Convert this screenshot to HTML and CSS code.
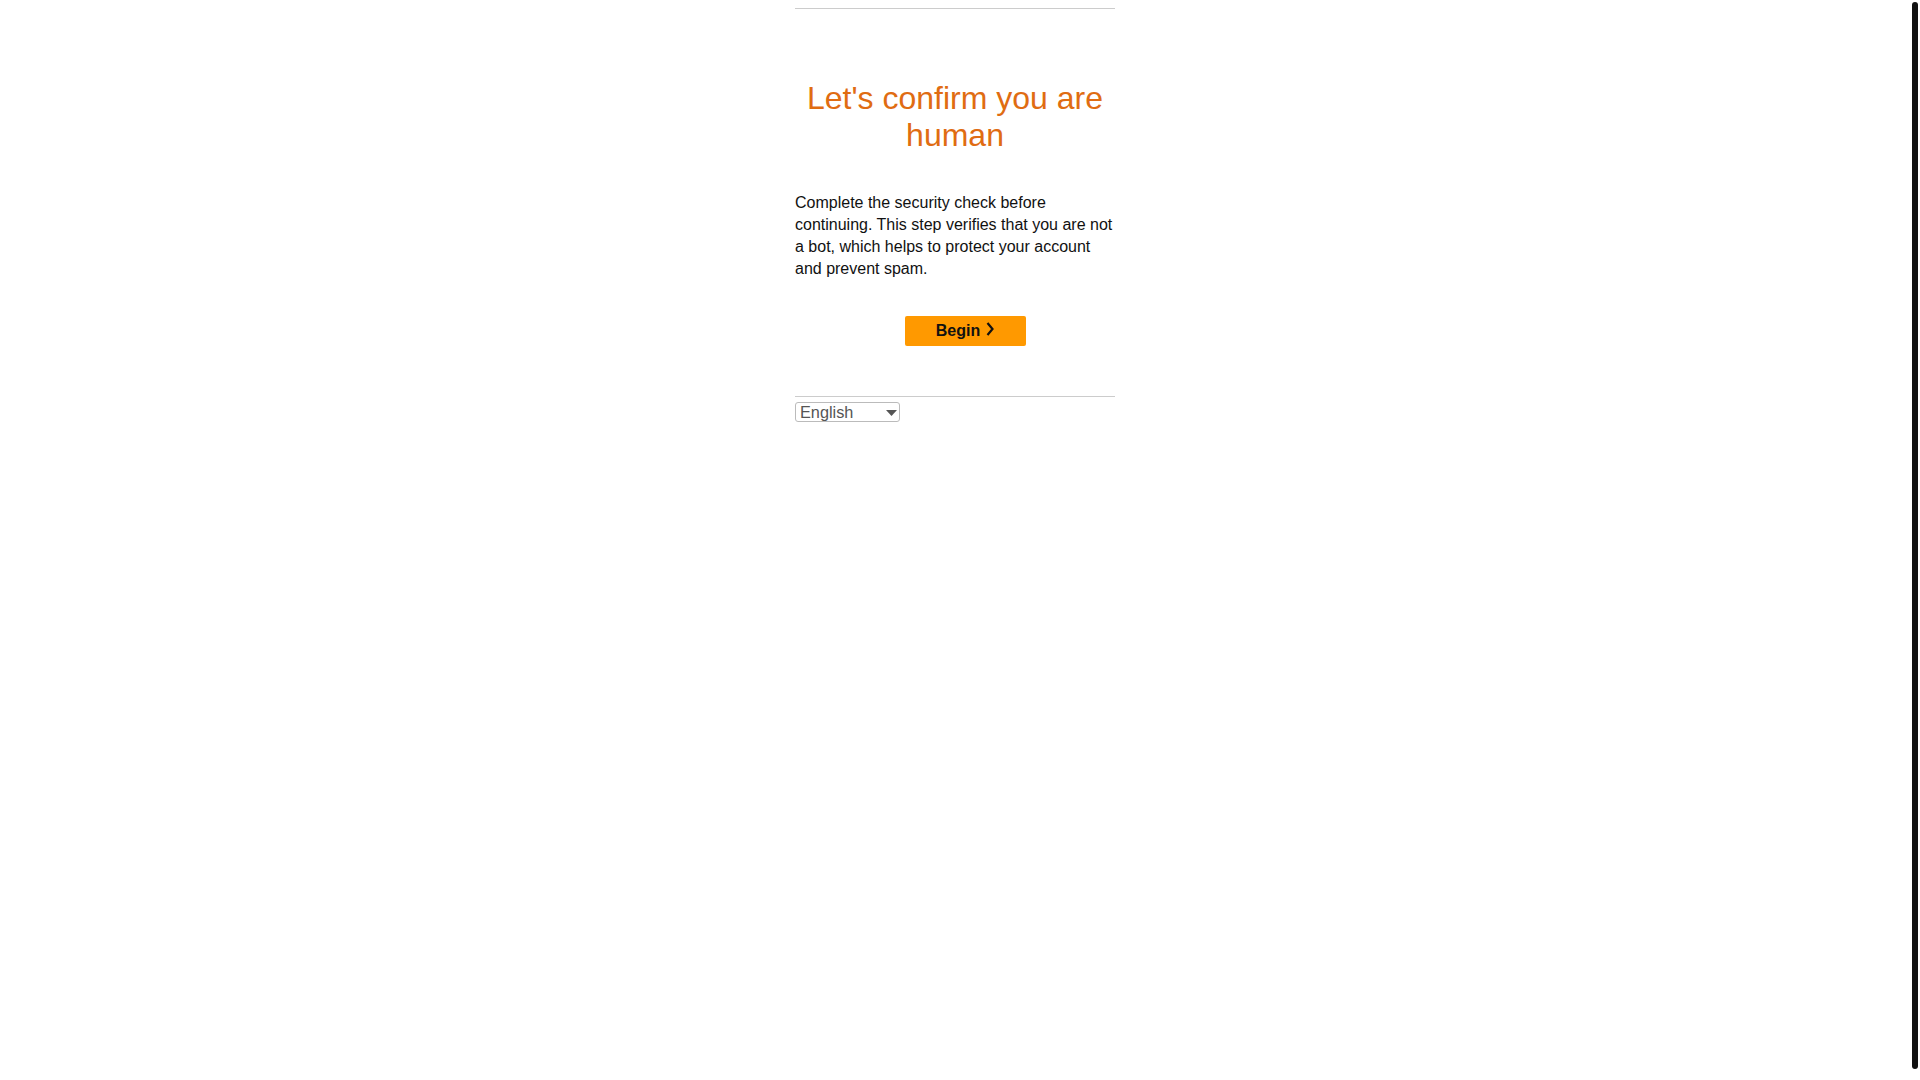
FILE: index.html
```html
<!DOCTYPE html>
<html lang="en">
<head>
<meta charset="utf-8">
<title>Let's confirm you are human</title>
<link rel="stylesheet" href="styles.css">
</head>
<body>
<main class="page">
  <section class="card">
    <h1 class="title">Let's confirm you are human</h1>
    <p class="intro">Complete the security check before continuing. This step verifies that you are not a bot, which helps to protect your account and prevent spam.</p>
    <div class="actions">
      <button class="begin" type="button">Begin<svg class="chev" width="10" height="16" viewBox="0 0 10 16" aria-hidden="true"><polyline points="2.5,2 7.5,8 2.5,14" fill="none" stroke="#111" stroke-width="2.2"/></svg></button>
    </div>
  </section>
  <footer class="foot">
    <div class="lang">
      <select class="lang-select" aria-label="Language">
        <option>English</option>
      </select>
      <svg class="lang-caret" width="11" height="6" viewBox="0 0 11 6" aria-hidden="true"><polygon points="0,0 11,0 5.5,6" fill="#555"/></svg>
    </div>
  </footer>
</main>
<div class="scrollbar"></div>
</body>
</html>
```

FILE: styles.css
```css
html, body {
  margin: 0;
  padding: 0;
  background: #fff;
}

body {
  font-family: "Liberation Sans", Arial, sans-serif;
  color: #111;
}

.page {
  width: 320px;
  margin-left: calc(50% - 165px);
  padding-top: 8px;
}

.card {
  border-top: 1px solid #cccccc;
  border-bottom: 1px solid #cccccc;
  padding: 71px 0 50px;
}

.title {
  margin: 0;
  font-size: 32px;
  font-weight: 400;
  line-height: 1.15;
  color: #e06c12;
  text-align: center;
}

.intro {
  margin: 38px 0 0;
  font-size: 16px;
  line-height: 22px;
  color: #111;
}

.actions {
  display: flex;
  justify-content: center;
  padding-left: 21px;
  margin-top: 36px;
}

.begin {
  display: flex;
  align-items: center;
  justify-content: center;
  gap: 5px;
  width: 121px;
  height: 30px;
  padding: 0;
  border: none;
  border-radius: 2px;
  background: #ff9900;
  font-family: "Liberation Sans", Arial, sans-serif;
  font-size: 16px;
  font-weight: 700;
  color: #111;
  cursor: pointer;
}

.chev {
  display: block;
  margin-top: -3px;
}

.foot {
  padding-top: 5px;
}

.lang {
  position: relative;
  width: 105px;
  height: 20px;
}

.lang-select {
  appearance: none;
  -webkit-appearance: none;
  box-sizing: border-box;
  width: 105px;
  height: 20px;
  margin: 0;
  padding: 0 0 0 4px;
  border: 1px solid #bbbbbb;
  border-radius: 3px;
  background: #fff;
  font-family: "Liberation Sans", Arial, sans-serif;
  font-size: 16.3px;
  line-height: 18px;
  color: #555;
}

.lang-caret {
  position: absolute;
  right: 3px;
  top: 8px;
  pointer-events: none;
}

.scrollbar {
  position: fixed;
  right: 2px;
  top: 2px;
  width: 6px;
  height: 1067px;
  border-radius: 3px;
  background: #111;
}
```
